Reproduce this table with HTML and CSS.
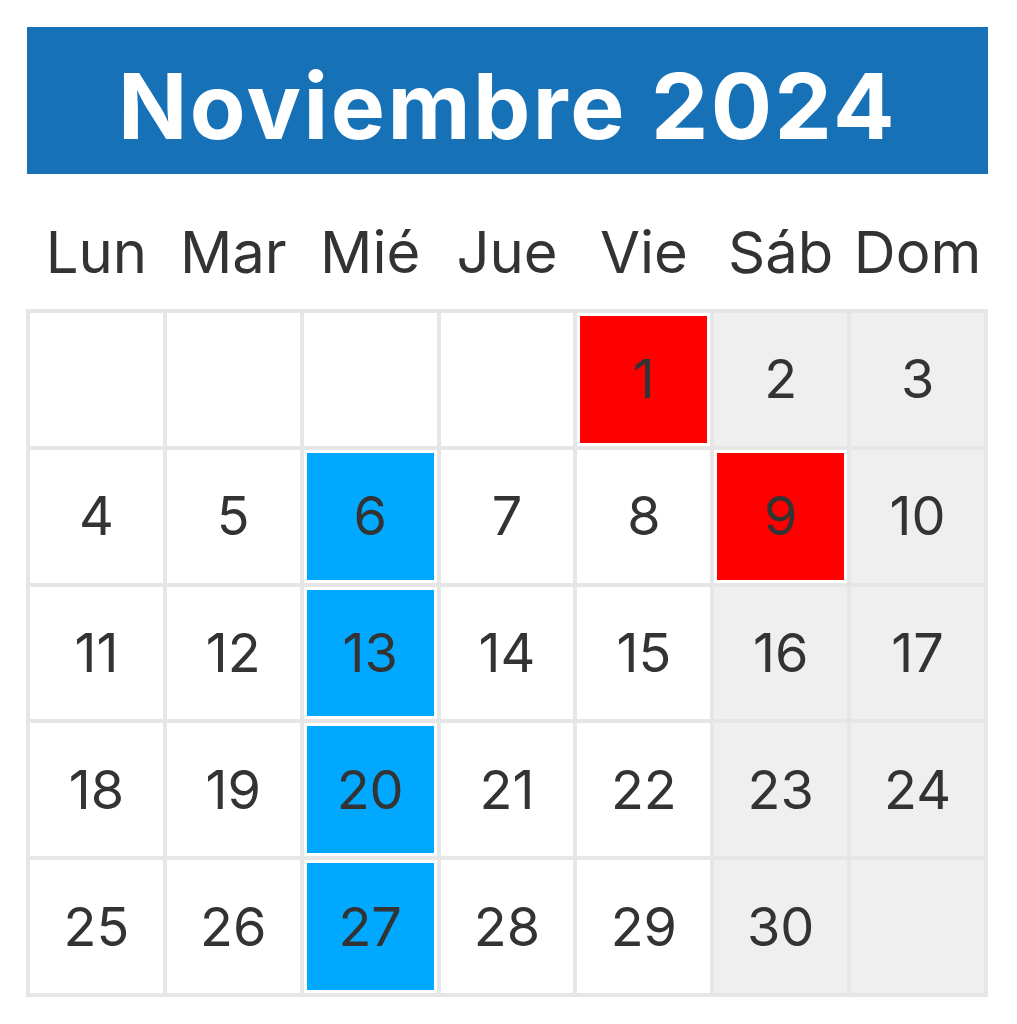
FILE: index.html
```html
<!DOCTYPE html>
<html lang="es">
<head>
<meta charset="utf-8">
<title>Noviembre 2024</title>
<link rel="stylesheet" href="styles.css">
</head>
<body>
<div class="page">
  <header class="title">Noviembre 2024</header>
  <div class="weekdays">
    <div>Lun</div><div>Mar</div><div>Mié</div><div>Jue</div><div>Vie</div><div>Sáb</div><div>Dom</div>
  </div>
  <div class="grid">
    <div class="cell"></div>
    <div class="cell"></div>
    <div class="cell"></div>
    <div class="cell"></div>
    <div class="cell red">1</div>
    <div class="cell we">2</div>
    <div class="cell we">3</div>

    <div class="cell">4</div>
    <div class="cell">5</div>
    <div class="cell blue">6</div>
    <div class="cell">7</div>
    <div class="cell">8</div>
    <div class="cell red">9</div>
    <div class="cell we">10</div>

    <div class="cell">11</div>
    <div class="cell">12</div>
    <div class="cell blue">13</div>
    <div class="cell">14</div>
    <div class="cell">15</div>
    <div class="cell we">16</div>
    <div class="cell we">17</div>

    <div class="cell">18</div>
    <div class="cell">19</div>
    <div class="cell blue">20</div>
    <div class="cell">21</div>
    <div class="cell">22</div>
    <div class="cell we">23</div>
    <div class="cell we">24</div>

    <div class="cell">25</div>
    <div class="cell">26</div>
    <div class="cell blue">27</div>
    <div class="cell">28</div>
    <div class="cell">29</div>
    <div class="cell we">30</div>
    <div class="cell we"></div>
  </div>
</div>
</body>
</html>
```
FILE: styles.css
```css
html, body {
  margin: 0;
  padding: 0;
  background: #ffffff;
}
body {
  font-family: Inter, "Open Sans", "DejaVu Sans", sans-serif;
  color: #333333;
}
.page {
  width: 962px;
  margin-left: 26px;
  padding-top: 27px;
}
.title {
  box-sizing: border-box;
  margin-left: 1px;
  height: 147px;
  padding-top: 12px;
  background: #1771b7;
  color: #ffffff;
  font-weight: 700;
  font-size: 91px;
  line-height: 135px;
  text-align: center;
  letter-spacing: 2.5px;
}
.weekdays {
  display: grid;
  grid-template-columns: repeat(7, 1fr);
  column-gap: 4px;
  padding: 0 4px;
  height: 135px;
  align-items: center;
  font-size: 58px;
  line-height: 1;
  text-align: center;
}
.weekdays div {
  padding-top: 20px;
}
.grid {
  display: grid;
  grid-template-columns: repeat(7, 1fr);
  grid-auto-rows: 132.8px;
  gap: 4px;
  padding: 4px;
  background: #e6e6e6;
}
.cell {
  background: #ffffff;
  display: flex;
  align-items: center;
  justify-content: center;
  font-size: 54px;
  line-height: 1;
}
.cell.we {
  background: #efefef;
}
.cell.red {
  background: #ff0000;
  border: 3px solid #ffffff;
}
.cell.blue {
  background: #00a8ff;
  border: 3px solid #ffffff;
}
```
